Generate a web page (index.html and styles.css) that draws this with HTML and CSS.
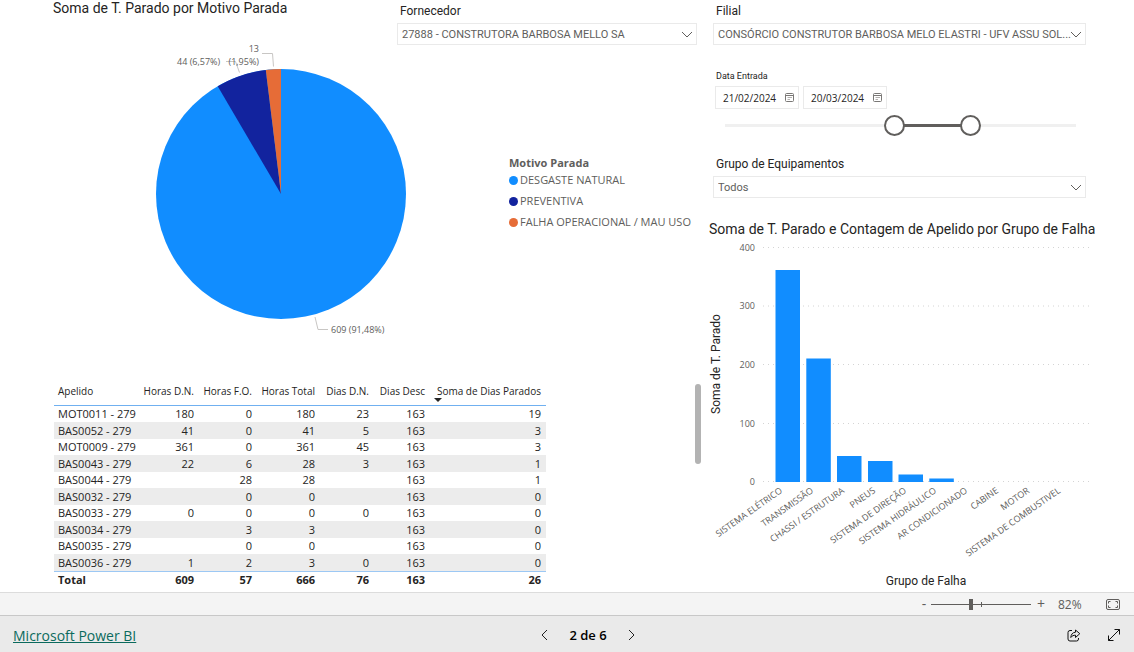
FILE: index.html
```html
<!DOCTYPE html>
<html lang="pt-BR">
<head>
<meta charset="utf-8">
<title>Soma de T. Parado</title>
<meta name="viewport" content="width=device-width, initial-scale=1">
<link rel="stylesheet" href="styles.css">
</head>
<body>
<main class="report">
  <section class="left">
    <div class="top">
      <h2 class="title pie-title">Soma de T. Parado por Motivo Parada</h2>
      <div class="field supplier">
        <label class="label" for="fornecedor">Fornecedor</label>
        <div class="select">
          <select id="fornecedor"><option>27888 - CONSTRUTORA BARBOSA MELLO SA</option></select>
          <svg class="chevron" viewBox="0 0 12 8"><path d="M1 1l5 5 5-5"/></svg>
        </div>
      </div>
    </div>
    <div class="pie-row">
      <svg class="pie" viewBox="53 45 416 309" role="img" aria-label="Soma de T. Parado por Motivo Parada">
        <circle cx="281" cy="194" r="125" fill="#118dff"/>
        <path d="M281 194L217.700 86.210A125 125 0 0 1 265.800 69.930Z" fill="#12239e"/>
        <path d="M281 194L265.800 69.930A125 125 0 0 1 281 69Z" fill="#e66c37"/>
        <g class="leader">
          <path d="M262 53.500h10.500l1 13"/>
          <path d="M226 61.500h9.500l4 11"/>
          <path d="M315 317l3 12.500h10"/>
        </g>
        <g class="chart-text">
          <text x="259" y="52" text-anchor="end">13</text>
          <text x="259" y="65" text-anchor="end">(1,95%)</text>
          <text x="177" y="65">44 (6,57%)</text>
          <text x="331" y="333">609 (91,48%)</text>
        </g>
      </svg>
      <div class="legend">
        <h3 class="legend-title">Motivo Parada</h3>
        <ul class="legend-list">
          <li><span class="dot blue"></span>DESGASTE NATURAL</li>
          <li><span class="dot navy"></span>PREVENTIVA</li>
          <li><span class="dot orange"></span>FALHA OPERACIONAL / MAU USO</li>
        </ul>
      </div>
    </div>
    <table class="table">
      <colgroup><col class="c-name"><col class="c-hdn"><col class="c-hfo"><col class="c-ht"><col class="c-ddn"><col class="c-dd"><col class="c-sum"></colgroup>
      <thead>
        <tr><th>Apelido</th><th>Horas D.N.</th><th>Horas F.O.</th><th>Horas Total</th><th>Dias D.N.</th><th>Dias Desc</th><th class="sorted">Soma de Dias Parados</th></tr>
      </thead>
      <tbody>
        <tr><td>MOT0011 - 279</td><td>180</td><td>0</td><td>180</td><td>23</td><td>163</td><td>19</td></tr>
        <tr><td>BAS0052 - 279</td><td>41</td><td>0</td><td>41</td><td>5</td><td>163</td><td>3</td></tr>
        <tr><td>MOT0009 - 279</td><td>361</td><td>0</td><td>361</td><td>45</td><td>163</td><td>3</td></tr>
        <tr><td>BAS0043 - 279</td><td>22</td><td>6</td><td>28</td><td>3</td><td>163</td><td>1</td></tr>
        <tr><td>BAS0044 - 279</td><td></td><td>28</td><td>28</td><td></td><td>163</td><td>1</td></tr>
        <tr><td>BAS0032 - 279</td><td></td><td>0</td><td>0</td><td></td><td>163</td><td>0</td></tr>
        <tr><td>BAS0033 - 279</td><td>0</td><td>0</td><td>0</td><td>0</td><td>163</td><td>0</td></tr>
        <tr><td>BAS0034 - 279</td><td></td><td>3</td><td>3</td><td></td><td>163</td><td>0</td></tr>
        <tr><td>BAS0035 - 279</td><td></td><td>0</td><td>0</td><td></td><td>163</td><td>0</td></tr>
        <tr><td>BAS0036 - 279</td><td>1</td><td>2</td><td>3</td><td>0</td><td>163</td><td>0</td></tr>
      </tbody>
      <tfoot>
        <tr><td>Total</td><td>609</td><td>57</td><td>666</td><td>76</td><td>163</td><td>26</td></tr>
      </tfoot>
    </table>
  </section>

  <div class="scroll"><span class="scroll-thumb"></span></div>

  <section class="right">
    <div class="field">
      <label class="label" for="filial">Filial</label>
      <div class="select">
        <select id="filial"><option>CONSÓRCIO CONSTRUTOR BARBOSA MELO ELASTRI - UFV ASSU SOL...</option></select>
        <svg class="chevron" viewBox="0 0 12 8"><path d="M1 1l5 5 5-5"/></svg>
      </div>
    </div>
    <div class="dates">
      <div class="label small">Data Entrada</div>
      <div class="date-row">
        <div class="date">
          <input type="text" value="21/02/2024" aria-label="Data inicial">
          <svg class="calendar" viewBox="0 0 9 9"><rect x="0.500" y="0.500" width="8" height="8" rx="1"/><path d="M.5 2.500h8"/><path class="faint" d="M2.500 4.500h4.500M2.500 6.500h2.500"/></svg>
        </div>
        <div class="date">
          <input type="text" value="20/03/2024" aria-label="Data final">
          <svg class="calendar" viewBox="0 0 9 9"><rect x="0.500" y="0.500" width="8" height="8" rx="1"/><path d="M.5 2.500h8"/><path class="faint" d="M2.500 4.500h4.500M2.500 6.500h2.500"/></svg>
        </div>
      </div>
      <div class="range">
        <span class="range-track"></span>
        <input type="range" min="0" max="1000" value="483" aria-label="Início do período">
        <input type="range" min="0" max="1000" value="699" aria-label="Fim do período">
      </div>
    </div>
    <div class="field">
      <label class="label" for="grupo">Grupo de Equipamentos</label>
      <div class="select">
        <select id="grupo"><option>Todos</option></select>
        <svg class="chevron" viewBox="0 0 12 8"><path d="M1 1l5 5 5-5"/></svg>
      </div>
    </div>
    <h2 class="title bar-title">Soma de T. Parado e Contagem de Apelido por Grupo de Falha</h2>
    <svg class="bars" viewBox="709 240 391 351" role="img" aria-label="Soma de T. Parado por Grupo de Falha">
      <path class="grid" d="M763 247.500h327M763 306h327M763 364.500h327M763 423.500h327M763 481.500h327"/>
      <g fill="#118dff">
        <rect x="775.500" y="270" width="24.500" height="212"/>
        <rect x="806.300" y="358.500" width="24.500" height="123.500"/>
        <rect x="837" y="456" width="24.500" height="26"/>
        <rect x="868" y="461" width="24.500" height="21"/>
        <rect x="898.500" y="474.500" width="24.500" height="7.500"/>
        <rect x="929.300" y="478.500" width="24.500" height="3.500"/>
      </g>
      <g class="chart-text" text-anchor="end">
        <text x="755" y="251">400</text>
        <text x="755" y="309">300</text>
        <text x="755" y="368">200</text>
        <text x="755" y="427">100</text>
        <text x="755" y="485">0</text>
      </g>
      <g class="chart-text" text-anchor="end">
        <text transform="translate(783 492) rotate(-35)">SISTEMA ELÉTRICO</text>
        <text transform="translate(814 492) rotate(-35)">TRANSMISSÃO</text>
        <text transform="translate(845 492) rotate(-35)">CHASSI / ESTRUTURA</text>
        <text transform="translate(876 492) rotate(-35)">PNEUS</text>
        <text transform="translate(907 492) rotate(-35)">SISTEMA DE DIREÇÃO</text>
        <text transform="translate(937 492) rotate(-35)">SISTEMA HIDRÁULICO</text>
        <text transform="translate(968 492) rotate(-35)">AR CONDICIONADO</text>
        <text transform="translate(999 492) rotate(-35)">CABINE</text>
        <text transform="translate(1030 492) rotate(-35)">MOTOR</text>
        <text transform="translate(1061 492) rotate(-35)">SISTEMA DE COMBUSTIVEL</text>
      </g>
      <g class="axis-title" text-anchor="middle">
        <text transform="translate(720 364) rotate(-90)">Soma de T. Parado</text>
        <text x="926" y="585">Grupo de Falha</text>
      </g>
    </svg>
  </section>
</main>

<div class="zoombar">
  <button class="zoom-btn" type="button" aria-label="Diminuir zoom">-</button>
  <input class="zoom-range" type="range" min="0" max="100" value="40" aria-label="Zoom">
  <button class="zoom-btn plus" type="button" aria-label="Aumentar zoom">+</button>
  <span class="zoom-value">82%</span>
  <button class="icon-btn fit" type="button" aria-label="Ajustar à página">
    <svg width="14" height="11" viewBox="0 0 14 11"><rect x="0.500" y="0.500" width="13" height="10" rx="1.500"/><path d="M4.500 2.500h-2V4.500M9.500 2.500h2V4.500M4.500 8.500h-2V6.500M9.500 8.500h2V6.500"/></svg>
  </button>
</div>

<footer class="footer">
  <a class="brand" href="#">Microsoft Power BI</a>
  <nav class="pager" aria-label="Páginas">
    <button class="icon-btn" type="button" aria-label="Página anterior"><svg width="7" height="12" viewBox="0 0 7 12"><path d="M6 1L1 6l5 5"/></svg></button>
    <span class="page">2 de 6</span>
    <button class="icon-btn" type="button" aria-label="Próxima página"><svg width="7" height="12" viewBox="0 0 7 12"><path d="M1 1l5 5-5 5"/></svg></button>
  </nav>
  <div class="actions">
    <button class="icon-btn dark" type="button" aria-label="Compartilhar"><svg width="14" height="13" viewBox="0 0 14 13"><path d="M5 1.500H3A2 2 0 0 0 1 3.500v6.500a2 2 0 0 0 2 2h6.500a2 2 0 0 0 2-2V9"/><path d="M8.500 1v2.200C5.500 3.400 4 5.500 3.800 8.500 5 6.800 6.500 6.200 8.500 6.200v2.300L12.800 4.700z"/></svg></button>
    <button class="icon-btn dark" type="button" aria-label="Tela inteira"><svg width="14" height="14" viewBox="0 0 14 14"><path d="M1.500 12.500l11-11M7.500 1.500h5v5M6.500 12.500h-5v-5"/></svg></button>
  </div>
</footer>
</body>
</html>
```
FILE: styles.css
```css
* { box-sizing: border-box; }
body {
  margin: 0;
  min-height: 100vh;
  display: flex;
  flex-direction: column;
  background: #fff;
  color: #252423;
  font-family: "Open Sans", "Noto Sans", sans-serif;
  font-size: 11px;
}
h2, h3, ul { margin: 0; padding: 0; font-weight: 400; }
button, input, select { font: inherit; color: inherit; }
svg { display: block; overflow: visible; }

.report {
  flex: 1;
  display: grid;
  grid-template-columns: minmax(0, 695fr) 6px minmax(0, 433fr);
}
.title {
  font-family: Roboto, sans-serif;
  font-size: 14px;
  line-height: 16px;
  color: #252423;
}
.left { padding-left: 53px; }
.top { display: flex; height: 45px; }
.pie-title { flex: 0 0 344px; }
.supplier { flex: 0 0 300px; }
.field { display: flex; flex-direction: column; }
.label {
  padding: 4px 0 0 3px;
  height: 23px;
  font-family: Roboto, sans-serif;
  font-size: 12px;
  line-height: 14px;
}
.small { height: 21px; font-size: 9px; padding-left: 1px; }
.select { position: relative; }
.select select {
  display: block;
  width: 100%;
  height: 22px;
  padding: 0 8px 0 4px;
  border: 1px solid #eaeaea;
  border-radius: 0;
  background: #fff;
  color: #605e5c;
  font-family: Roboto, sans-serif;
  appearance: none;
}
.chevron {
  position: absolute;
  right: 4px;
  top: 8px;
  width: 12px;
  height: 8px;
  fill: none;
  stroke: #605e5c;
  pointer-events: none;
}

.pie-row { display: flex; height: 332px; }
.pie { flex: 0 0 416px; height: 309px; }
.leader { fill: none; stroke: #c8c6c4; }
.chart-text { font-size: 9px; fill: #605e5c; }
.legend { padding: 109px 0 0 40px; color: #605e5c; white-space: nowrap; }
.legend-title { font-weight: 700; font-size: 11px; line-height: 18px; }
.legend-list { list-style: none; display: flex; flex-direction: column; gap: 5px; }
.legend-list li { display: flex; align-items: center; gap: 2px; line-height: 16px; }
.dot { width: 9px; height: 9px; border-radius: 50%; }
.blue { background: #118dff; }
.navy { background: #12239e; }
.orange { background: #e66c37; }

.table {
  width: 492px;
  margin-left: 1px;
  table-layout: fixed;
  border-collapse: collapse;
}
.c-name { width: 84px; }
.c-hdn { width: 61px; }
.c-hfo { width: 58px; }
.c-ht { width: 63px; }
.c-ddn { width: 54px; }
.c-dd { width: 56px; }
.c-sum { width: 116px; }
.table th, .table td {
  padding: 0 5px 0 0;
  font-weight: 400;
  line-height: 16px;
  text-align: right;
  white-space: nowrap;
}
.table th:first-child, .table td:first-child { padding-left: 4px; text-align: left; }
.table th { height: 28px; font-size: 10px; border-bottom: 1px solid #70b0f0; }
.table tbody tr:nth-child(even) { background: #ececec; }
.table tbody tr:nth-child(even) td { line-height: 17px; }
.table tfoot td { border-top: 1px solid #9cc8f4; font-weight: 700; }
.sorted { position: relative; }
.sorted::after {
  content: "";
  position: absolute;
  left: 4px;
  bottom: 3px;
  border: 4px solid transparent;
  border-top-color: #252423;
  border-bottom: 0;
}

.scroll-thumb { display: block; height: 80px; margin-top: 384px; border-radius: 3px; background: #b3b3b3; }

.right { padding: 0 48px 0 12px; display: flex; flex-direction: column; }
.dates { padding: 20px 0 0 2px; }
.date-row { display: flex; gap: 4px; }
.date {
  display: flex;
  align-items: center;
  width: 84px;
  height: 23px;
  padding: 0 4px 0 7px;
  border: 1px solid #eaeaea;
}
.date input { flex: 1; min-width: 0; padding: 0; border: 0; background: none; font-size: 10px; }
.calendar { width: 9px; height: 9px; fill: none; stroke: #7a7876; }
.faint { stroke: #b4b2b0; }
.range { display: grid; align-items: center; height: 21px; margin-top: 6px; }
.range > * { grid-area: 1 / 1; }
.range-track {
  height: 3px;
  margin: 0 10px;
  background: linear-gradient(90deg, #f0f0f0 48%, #605e5c 48% 70%, #f0f0f0 70%);
}
.range input { width: 100%; height: 21px; margin: 0; background: none; appearance: none; pointer-events: none; }
.range input::-webkit-slider-thumb {
  appearance: none;
  width: 21px;
  height: 21px;
  border: 2px solid #605e5c;
  border-radius: 50%;
  background: #fff;
  pointer-events: auto;
}
.dates + .field { padding-top: 17px; }
.bar-title { margin: 23px -40px 3px -4px; white-space: nowrap; }
.bars { width: 391px; height: 351px; margin-left: -4px; }
.grid { fill: none; stroke: #d4d4d4; stroke-dasharray: 1 4; }
.axis-title { font-family: Roboto, sans-serif; font-size: 12px; fill: #252423; }

.zoombar {
  display: flex;
  align-items: center;
  justify-content: flex-end;
  height: 23px;
  padding-right: 14px;
  border-top: 1px solid #dcdcdc;
  background: #f4f4f4;
  color: #605e5c;
}
.zoom-btn { width: 14px; padding: 0; border: 0; background: none; font-size: 14px; line-height: 16px; }
.plus { width: 20px; }
.zoom-range {
  width: 100px;
  height: 12px;
  margin: 0;
  appearance: none;
  background:
    linear-gradient(#605e5c, #605e5c) 50px 50% / 1px 5px no-repeat,
    linear-gradient(#605e5c, #605e5c) 0 50% / 100% 1px no-repeat;
}
.zoom-range::-webkit-slider-thumb { appearance: none; width: 4px; height: 11px; background: #605e5c; }
.zoom-value { width: 55px; padding-left: 7px; font-size: 12px; }
.icon-btn { display: grid; place-items: center; padding: 0; border: 0; background: none; }
.icon-btn svg { fill: none; stroke: #605e5c; }
.icon-btn.dark svg { stroke: #111; }

.footer {
  display: grid;
  grid-template-columns: 1fr auto 1fr;
  align-items: center;
  height: 37px;
  padding: 2px 13px 0;
  border-top: 1px solid #c8c8c8;
  background: #eaeaea;
  font-size: 14px;
}
.brand { color: #0b6a5d; }
.pager { display: flex; align-items: center; gap: 21px; margin-left: 42px; color: #000; font-weight: 600; font-size: 13px; }
.pager .icon-btn svg { stroke: #222; }
.actions { display: flex; justify-content: flex-end; gap: 26px; }
```
